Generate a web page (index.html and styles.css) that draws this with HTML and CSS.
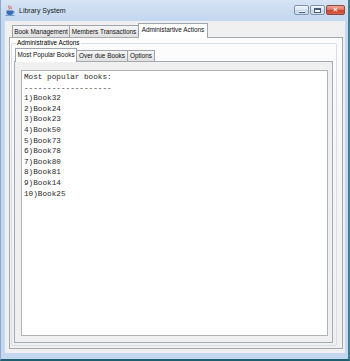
FILE: index.html
```html
<!DOCTYPE html>
<html>
<head>
<meta charset="utf-8">
<link rel="stylesheet" href="styles.css">
</head>
<body>
<div class="window">
  <div class="titlebar">
    <svg class="appicon" viewBox="0 0 10 11" width="10" height="11">
      <path d="M4 0.5 C2.5 2 5.5 3 4 4.5" stroke="#e0452a" stroke-width="1" fill="none"/>
      <path d="M6 1 C5 2 7 3 6 4.2" stroke="#e0452a" stroke-width="0.9" fill="none"/>
      <path d="M1.5 5.5 H8 V8 C8 9.5 6.5 10 4.8 10 C3 10 1.5 9.5 1.5 8 Z" fill="#3a6cb4"/>
      <path d="M8 6.2 C9.6 6.2 9.6 8.2 8 8.2" stroke="#3a6cb4" stroke-width="0.8" fill="none"/>
      <rect x="0.5" y="10.2" width="9" height="0.8" fill="#5a86c6"/>
    </svg>
    <span class="title">Library System</span>
    <div class="ctrls">
      <span class="btn min"><span class="glyph-min"></span></span>
      <span class="btn max"><span class="glyph-max"></span></span>
      <span class="btn close"><span class="glyph-x">✕</span></span>
    </div>
  </div>
  <div class="client">
    <div class="tabs outer-tabs">
      <div class="tab w-book">Book Management</div>
      <div class="tab w-members">Members Transactions</div>
      <div class="tab sel w-admin">Administartive Actions</div>
    </div>
    <div class="panel outer-panel">
      <fieldset class="group">
        <legend>Administrative Actions</legend>
        <div class="tabs inner-tabs">
          <div class="tab sel w-popular">Most Popular Books</div>
          <div class="tab w-overdue">Over due Books</div>
          <div class="tab w-options">Options</div>
        </div>
        <div class="panel inner-panel">
<pre class="textarea">Most popular books:
-------------------
1)Book32
2)Book24
3)Book23
4)Book50
5)Book73
6)Book78
7)Book80
8)Book81
9)Book14
10)Book25</pre>
        </div>
      </fieldset>
    </div>
  </div>
</div>
</body>
</html>
```
FILE: styles.css
```css
* { box-sizing: border-box; }
html, body {
  margin: 0;
  padding: 0;
  width: 350px;
  height: 361px;
  overflow: hidden;
}
body {
  font-family: "Liberation Sans", Arial, sans-serif;
  font-size: 6.4px;
  color: #000;
}
.window {
  width: 350px;
  height: 361px;
  display: flex;
  flex-direction: column;
  background: #c3d7ef;
  border-left: 1px solid #8eaacb;
  border-right: 2px solid #3f7f93;
  border-bottom: 2px solid #1f5e6f;
}
.titlebar {
  height: 21px;
  display: flex;
  align-items: center;
  padding-left: 4px;
  background: linear-gradient(#d6e4f4, #c3d7ef);
}
.appicon { margin-right: 4px; flex: none; }
.title {
  font-size: 7px;
  color: #1b1b1b;
}
.ctrls {
  margin-left: auto;
  align-self: flex-start;
  margin-top: 5px;
  margin-right: 3px;
  display: flex;
  gap: 1px;
}
.btn {
  height: 10px;
  border: 1px solid #7f95b0;
  border-radius: 2px;
  background: linear-gradient(#f0f5fb, #dae5f2 50%, #c6d6ea 51%, #d2e0f0);
  display: flex;
  align-items: center;
  justify-content: center;
}
.min, .max { width: 15px; }
.close {
  width: 19px;
  border-color: #94463a;
  background: linear-gradient(#eca99a, #d8725f 50%, #c8432c 51%, #d5604a);
}
.glyph-min {
  width: 6px;
  height: 2px;
  background: #fff;
  border: 1px solid #4a5d78;
  border-width: 0 0 1px 0;
  margin-top: 3px;
}
.glyph-max {
  width: 7px;
  height: 5px;
  border: 1px solid #4a5d78;
  border-top-width: 2px;
  background: #fff;
}
.glyph-x {
  color: #fff;
  font-size: 7px;
  font-family: "DejaVu Sans", sans-serif;
  font-weight: bold;
  line-height: 8px;
}
.client {
  flex: 1;
  margin: 0 3px 6px 4px;
  background: #f0f0f0;
  padding: 2px 2px 4px 4px;
  display: flex;
  flex-direction: column;
}
.tabs {
  display: flex;
  align-items: flex-end;
  flex: none;
}
.outer-tabs { height: 14px; padding-left: 3px; }
.inner-tabs { height: 13px; padding-left: 1px; }
.tab {
  height: 12px;
  border: 1px solid #9ea4ad;
  border-bottom: none;
  margin-right: -1px;
  background: linear-gradient(#f5f5f5, #ebebeb 50%, #e0e0e0);
  white-space: nowrap;
  overflow: hidden;
  text-align: center;
  line-height: 11px;
  color: #111;
}
.inner-tabs .tab { height: 11px; line-height: 10px; }
.tab.sel {
  height: 15px;
  background: #fff;
  margin-bottom: -1px;
  position: relative;
  z-index: 1;
  line-height: 12px;
}
.inner-tabs .tab.sel { height: 14px; line-height: 12px; }
.w-book { width: 58px; }
.w-members { width: 70px; }
.w-admin { width: 70px; }
.w-popular { width: 62px; }
.w-overdue { width: 52px; }
.w-options { width: 28px; }
.panel {
  border: 1px solid #a4aab2;
  display: flex;
  flex-direction: column;
}
.outer-panel {
  flex: 1;
  background: linear-gradient(#fdfdfd, #f5f5f5 40%, #f0f0f0);
  padding: 1px 5px 2px 1px;
}
.group {
  flex: 1;
  margin: 0;
  min-width: 0;
  border: 1px solid #d5dfe5;
  border-radius: 2px;
  padding: 1px 3px 2px 2px;
  display: flex;
  flex-direction: column;
}
.group legend {
  padding: 0 1px;
  margin-left: 2px;
  line-height: 8px;
  color: #000;
}
.inner-panel {
  flex: 1;
  background: #f0f0f0;
  padding: 8px 4px 6px 6px;
}
.textarea {
  flex: 1;
  margin: 0;
  border: 1px solid #b2b2b2;
  background: #fff;
  padding: 1px 1px 1px 2px;
  font-family: "Liberation Mono", "Courier New", monospace;
  font-size: 7.7px;
  line-height: 10.6px;
  color: #2a2a2a;
}
```
